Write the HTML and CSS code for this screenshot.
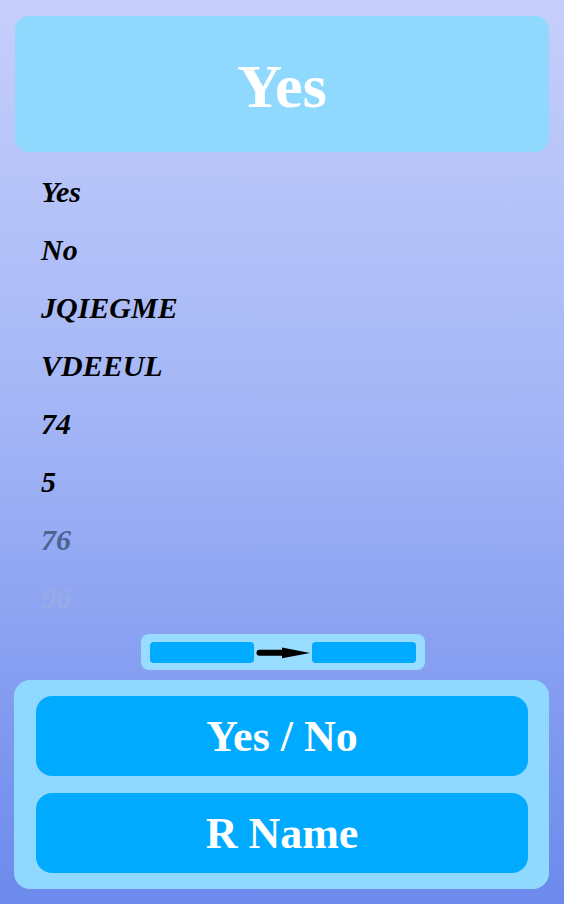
FILE: index.html
```html
<!DOCTYPE html>
<html>
  <head>
    <meta charset="UTF-8" />
    <title>Picker</title>
    <link rel="stylesheet" href="styles.css">
  </head>

  <body>
    <div class="app">
      <div class="current">Yes</div>

      <ul class="history">
        <li>Yes</li>
        <li>No</li>
        <li>JQIEGME</li>
        <li>VDEEUL</li>
        <li>74</li>
        <li>5</li>
        <li class="fade-1">76</li>
        <li class="fade-2">96</li>
      </ul>

      <div class="range">
        <div class="range-box"></div>
        <svg class="range-arrow" width="54" height="14" viewBox="0 0 54 14">
          <path d="M3.5 3.8 H30 V9.8 H3.5 A3 3 0 0 1 3.5 3.8 Z" fill="#000" />
          <path d="M26 1.6 L54 7 L26 12.2 Z" fill="#000" />
        </svg>
        <div class="range-box"></div>
      </div>

      <div class="actions">
        <button class="action-btn">Yes / No</button>
        <button class="action-btn">R Name</button>
      </div>
    </div>
  </body>
</html>
```

FILE: styles.css
```css
html,
body {
  margin: 0;
  padding: 0;
}

body {
  font-family: "Liberation Serif", "DejaVu Serif", serif;
  min-height: 904px;
  background: linear-gradient(180deg, #c6cffb 0%, #a4b6f6 45%, #6c8aec 100%);
}

.app {
  display: flex;
  flex-direction: column;
  padding: 16px 15px 15px 14px;
}

.current {
  height: 136px;
  margin-left: 1px;
  padding-top: 4px;
  box-sizing: border-box;
  display: flex;
  align-items: center;
  justify-content: center;
  background: #90d9fe;
  border-radius: 14px;
  color: #fff;
  font-size: 62px;
  font-weight: bold;
}

.history {
  list-style: none;
  margin: 11px 0 0;
  padding: 0 0 0 27px;
}

.history li {
  font-size: 30px;
  line-height: 58px;
  font-weight: bold;
  font-style: italic;
  color: #000;
}

.history .fade-1 {
  color: #4b6591;
}

.history .fade-2 {
  color: #98abe8;
}

.range {
  align-self: center;
  margin: 7px 0 0 3px;
  width: 284px;
  height: 36px;
  box-sizing: border-box;
  padding: 8px 9px 7px;
  display: flex;
  align-items: center;
  justify-content: space-between;
  background: #98dcff;
  border-radius: 8px;
}

.range-box {
  width: 104px;
  height: 21px;
  background: #00aaff;
  border-radius: 4px;
}

.range-arrow {
  display: block;
}

.actions {
  margin-top: 10px;
  padding: 16px 21px 16px 22px;
  display: flex;
  flex-direction: column;
  gap: 17px;
  background: #90d9fe;
  border-radius: 16px;
}

.action-btn {
  height: 80px;
  border: none;
  border-radius: 16px;
  background: #00aaff;
  color: #fff;
  font-family: inherit;
  font-size: 44px;
  font-weight: bold;
  cursor: pointer;
}
```
